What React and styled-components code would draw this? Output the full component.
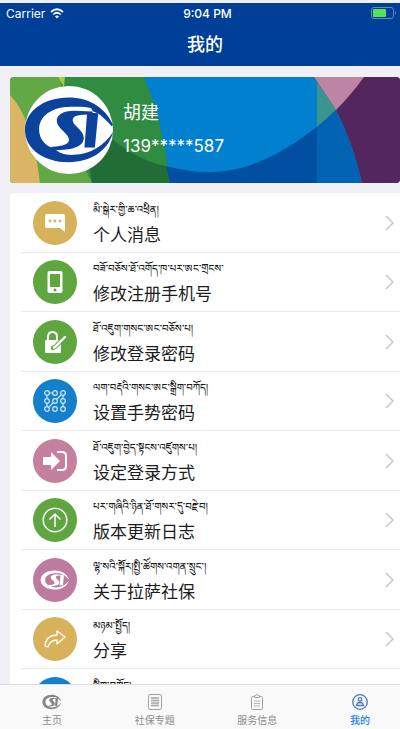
import React from "react";
import styled, { createGlobalStyle } from "styled-components";

const GlobalStyle = createGlobalStyle`
  * {
    box-sizing: border-box;
  }

  body {
    margin: 0;
    background-color: #efeff5;
    font-family: "Liberation Sans", "Noto Sans CJK SC", sans-serif;
    color: #1c1c1c;
  }
`;

const Page = styled.div`
  display: flex;
  flex-direction: column;
  height: 100vh;
  overflow: hidden;
`;

const Header = styled.header`
  flex: none;
  margin-top: 3px;
  padding-bottom: 8px;
  background-color: #003f98;
  color: #fff;
`;

const StatusBar = styled.div`
  display: grid;
  grid-template-columns: 1fr auto 1fr;
  align-items: center;
  height: 20px;
  padding: 0 3px 0 6px;
  font-family: Inter, sans-serif;
  font-size: 12px;
`;

const Carrier = styled.span`
  display: flex;
  align-items: center;
  gap: 5px;
`;

const Clock = styled.span`
  padding-left: 12px;
  font-weight: 500;
`;

const Battery = styled.svg`
  justify-self: end;
`;

const Title = styled.h1`
  margin: 9px 0 0;
  padding-left: 10px;
  font-size: 18px;
  font-weight: 500;
  line-height: 26px;
  text-align: center;
`;

const Main = styled.main`
  flex: 1;
  min-height: 0;
  display: flex;
  flex-direction: column;
  gap: 10px;
  padding: 11px 0 0 10px;
`;

const Profile = styled.section`
  position: relative;
  flex: none;
  display: flex;
  align-items: center;
  gap: 10px;
  height: 106px;
  padding-left: 15px;
  border-radius: 4px;
  overflow: hidden;
  color: #fff;
`;

const Backdrop = styled.svg`
  position: absolute;
  inset: 0;
  width: 100%;
  height: 100%;
`;

const Avatar = styled.svg`
  position: relative;
`;

const Owner = styled.div`
  position: relative;
`;

const OwnerName = styled.div`
  font-size: 18px;
  line-height: 32px;
`;

const Phone = styled.div`
  font-family: Inter, sans-serif;
  font-size: 17px;
  line-height: 34px;
`;

const Menu = styled.ul`
  flex: 1;
  min-height: 0;
  margin: 0;
  padding: 0;
  border-radius: 4px 0 0 0;
  background-color: #fff;
  list-style: none;
  overflow: hidden;
`;

const MenuItem = styled.li`
  height: 60px;
  padding-left: 11px;

  &:nth-child(even) {
    height: 59px;
  }
`;

const MenuButton = styled.button`
  display: flex;
  align-items: center;
  gap: 16px;
  width: 100%;
  height: 100%;
  padding: 0 6px 0 12px;
  border: none;
  border-bottom: 1px solid #ebebed;
  background: none;
  color: inherit;
  font-family: inherit;
  text-align: left;
  cursor: pointer;
`;

const Disc = styled.span`
  flex: none;
  display: flex;
  align-items: center;
  justify-content: center;
  width: 44px;
  height: 44px;
  border-radius: 50%;
  background-color: ${(props) => props.$color};
`;

const Labels = styled.span`
  flex: 1;
  display: flex;
  flex-direction: column;
  height: 44px;
`;

const Tibetan = styled.span`
  height: 22px;
  font-family: "Noto Serif Tibetan", "Noto Sans Tibetan", "Microsoft Himalaya", "Noto Sans", serif;
  font-size: 10px;
  font-weight: 500;
  line-height: 22px;
  white-space: nowrap;
`;

const Chinese = styled.span`
  font-size: 17px;
  line-height: 26px;
  white-space: nowrap;
`;

const TabBar = styled.nav`
  flex: none;
  display: flex;
  justify-content: space-between;
  height: 45px;
  padding: 0 20px 0 32px;
  border-top: 1px solid #dcdcdd;
  background-color: #f9f9f9;
`;

const Tab = styled.a`
  display: flex;
  flex-direction: column;
  align-items: center;
  gap: 4px;
  width: 40px;
  padding-top: 9px;
  color: ${(props) => (props.$active ? "#1a82f5" : "#8c8c8c")};
  font-size: 10px;
  font-weight: ${(props) => (props.$active ? 500 : 400)};
  line-height: 14px;
  text-decoration: none;
  white-space: nowrap;
`;

const Emblem = ({ color }) => (
  <g fill={color}>
    <path d="M272 122C248 70 200 41 140 41C66 41 10 82 10 138C10 194 66 234 140 234C205 234 258 200 272 145C246 184 205 211 155 212C127 213 110 205 101 196L88 190C64 180 52 160 52 136C52 98 88 70 145 69C173 68 192 69 207 73L212 82L228 89C240 98 256 112 268 127Z" />
    <path d="M211 83L158 81C121 81 102 95 105 114C109 136 141 148 141 168C141 181 122 186 92 188L80 196C135 202 181 193 185 165C188 139 151 125 152 108C153 94 172 92 211 92Z" />
    <path d="M195 86L228 88L218 190L187 190Z" />
  </g>
);

const ChatIcon = () => (
  <svg width="22" height="20" viewBox="0 0 22 20">
    <path d="M3 1H19Q21 1 21 3V19L16 15H3Q1 15 1 13V3Q1 1 3 1Z" fill="#fff" />
    <g fill="#d8b25a">
      <circle cx="6" cy="8" r="1.4" />
      <circle cx="11" cy="8" r="1.4" />
      <circle cx="16" cy="8" r="1.4" />
    </g>
  </svg>
);

const PhoneIcon = () => (
  <svg width="16" height="24" viewBox="0 0 16 24">
    <rect x="0.5" y="1" width="15" height="22" rx="2" fill="#fff" />
    <rect x="3" y="4" width="10" height="13" fill="#5fa641" />
    <circle cx="8" cy="20" r="1.5" fill="#5fa641" />
  </svg>
);

const LockIcon = () => (
  <svg width="24" height="24" viewBox="0 0 24 24">
    <path d="M5 11V7Q5 2 9.5 2Q14 2 14 7V11" fill="none" stroke="#fff" strokeWidth="2" />
    <rect x="2" y="10" width="16" height="13" rx="1" fill="#fff" />
    <path d="M22 7L13 16L10 18" fill="none" stroke="#5fa641" strokeWidth="4.4" strokeLinecap="round" />
    <path d="M22 7L13 16L11 17.5" fill="none" stroke="#fff" strokeWidth="2.4" strokeLinecap="round" />
  </svg>
);

const GestureIcon = () => (
  <svg width="22" height="22" viewBox="0 0 22 22" fill="none" stroke="#cfe6f7" strokeWidth="1.2">
    <path d="M3 5V9M3 13V17M5 3H9M17 5L13 9M9 13L5 17M19 5V9M19 13V17" />
    {[3, 11, 19].map((y) =>
      [3, 11, 19].map((x) => <circle key={`${x}-${y}`} cx={x} cy={y} r="2.3" fill="#147fcb" />)
    )}
  </svg>
);

const LoginIcon = () => (
  <svg width="26" height="22" viewBox="0 0 26 22">
    <path d="M1 7H9V2L18 11L9 20V15H1Z" fill="#fff" />
    <path d="M15 2H20Q24 2 24 6V16Q24 20 20 20H15" fill="none" stroke="#fff" strokeWidth="2" />
  </svg>
);

const UpIcon = () => (
  <svg width="26" height="26" viewBox="0 0 26 26" fill="none" stroke="#fff" strokeWidth="1.5">
    <circle cx="13" cy="13" r="11.8" />
    <path d="M13 20V7M7.5 12.5L13 7L18.5 12.5" />
  </svg>
);

const AboutIcon = () => (
  <svg width="30" height="20" viewBox="4 36 280 202" preserveAspectRatio="none">
    <Emblem color="#fff" />
  </svg>
);

const ShareIcon = () => (
  <svg width="22" height="20" viewBox="0 0 22 20" fill="none" stroke="#fff" strokeWidth="1.3" strokeLinejoin="round">
    <path d="M13 2L21 8L13 15V11Q6 11 4 18L1 17Q2 6 13 6Z" />
  </svg>
);

const items = [
  { id: "message", color: "#d8b25a", Icon: ChatIcon, bo: "མི་སྒེར་གྱི་ཆ་འཕྲིན།", zh: "个人消息" },
  { id: "phone", color: "#5fa641", Icon: PhoneIcon, bo: "བཟོ་བཅོས་ཐོ་འགོད་ཁ་པར་ཨང་གྲངས་", zh: "修改注册手机号" },
  { id: "password", color: "#5fa641", Icon: LockIcon, bo: "ཐོ་འཇུག་གསང་ཨང་བཅོས་པ།", zh: "修改登录密码" },
  { id: "gesture", color: "#147fcb", Icon: GestureIcon, bo: "ལག་བརྡའི་གསང་ཨང་སྒྲིག་བཀོད།", zh: "设置手势密码" },
  { id: "login", color: "#c4809c", Icon: LoginIcon, bo: "ཐོ་འཇུག་བྱེད་སྟངས་འཛུགས་པ།", zh: "设定登录方式" },
  { id: "update", color: "#5fa641", Icon: UpIcon, bo: "པར་གཞིའི་ཉིན་ཐོ་གསར་དུ་བརྗེ་བ།", zh: "版本更新日志" },
  { id: "about", color: "#bd7b9f", Icon: AboutIcon, bo: "ལྷ་སའི་སྐོར།སྤྱི་ཚོགས་འགན་སྲུང་།", zh: "关于拉萨社保" },
  { id: "share", color: "#d8b25a", Icon: ShareIcon, bo: "མཉམ་སྤྱོད།", zh: "分享" },
  { id: "settings", color: "#147fcb", bo: "སྒྲིག་བཀོད།" },
];

const HomeIcon = () => (
  <svg width="20" height="16" viewBox="4 30 280 214" preserveAspectRatio="none">
    <Emblem color="#858585" />
  </svg>
);

const TopicIcon = () => (
  <svg width="16" height="16" viewBox="0 1 16 16" fill="none" stroke="#a3a3a3">
    <rect x="1.5" y="1.5" width="13" height="15" rx="1.5" />
    <path d="M4 5H12M4 7.5H12M4 10H12M4 12.5H12" strokeWidth="1.3" />
  </svg>
);

const ServiceIcon = () => (
  <svg width="14" height="16" viewBox="0 1 14 16" fill="none" stroke="#a3a3a3">
    <rect x="1.5" y="3.5" width="11" height="13" rx="1" />
    <path d="M4.5 4.5V2.5H5.5Q7 0.5 8.5 2.5H9.5V4.5Z" fill="#f9f9f9" />
    <path d="M4 8H10M4 10.5H10M4 13H10" strokeWidth="0.8" />
  </svg>
);

const MeIcon = () => (
  <svg width="16" height="16" viewBox="1 1 16 16" fill="none" stroke="#4a78bd" strokeWidth="1.3">
    <circle cx="9" cy="9" r="7.3" />
    <circle cx="9" cy="6.5" r="1.8" />
    <path d="M5.5 12.5Q6 9.5 9 9.5Q12 9.5 12.5 12.5Z" />
  </svg>
);

const tabs = [
  { label: "主页", Icon: HomeIcon },
  { label: "社保专题", Icon: TopicIcon },
  { label: "服务信息", Icon: ServiceIcon },
  { label: "我的", Icon: MeIcon, active: true },
];

const App = () => {
  return (
    <>
      <GlobalStyle />
      <Page>
        <Header>
          <StatusBar>
            <Carrier>
              Carrier
              <svg width="14" height="11" viewBox="0 0 14 11" fill="none" stroke="#fff" strokeWidth="1.7">
                <path d="M1 4Q7 -1.5 13 4M3.3 6.5Q7 3 10.7 6.5" />
                <path d="M5 8.3Q7 6.6 9 8.3L7 10.5Z" fill="#fff" stroke="none" />
              </svg>
            </Carrier>
            <Clock>9:04 PM</Clock>
            <Battery width="26" height="12" viewBox="0 0 26 12">
              <rect x="0.5" y="0.5" width="22" height="11" rx="2.5" fill="none" stroke="#6688bd" />
              <rect x="2" y="2" width="13" height="8" rx="1" fill="#53e353" />
              <path d="M24 4Q26 6 24 8Z" fill="#6688bd" />
            </Battery>
          </StatusBar>
          <Title>我的</Title>
        </Header>

        <Main>
          <Profile>
            <Backdrop viewBox="0 0 390 106" preserveAspectRatio="none" aria-hidden="true">
              <rect width="390" height="106" fill="#2f8c41" />
              <path d="M0 0H50Q58 60 82 106H0Z" fill="#62a844" />
              <path d="M48 0H55L54 10Z" fill="#a9cb3c" />
              <path d="M0 18Q22 40 30 106H0Z" fill="#dab566" />
              <path d="M70 30C100 65 128 84 156 89L160 106H82Z" fill="#226d35" />
              <path d="M134 0Q152 40 160 106H307V0Z" fill="#0080cf" />
              <path d="M156 89Q178 95 200 95C250 95 290 62 307 50V106H160Z" fill="#004fa2" />
              <path d="M304 0H390V106H352Q343 66 326 33Z" fill="#54265f" />
              <path d="M304 0H354Q341 18 326 33Z" fill="#bd85a3" />
              <path d="M307 5L326 33L307 50Z" fill="#3b958e" />
              <path d="M307 50L326 33Q343 66 352 106H307Z" fill="#0063b3" />
            </Backdrop>
            <Avatar width="88" height="88" viewBox="10 7 262 262" role="img" aria-label="CSI">
              <circle cx="141" cy="138" r="131" fill="#fff" />
              <Emblem color="#0b429c" />
            </Avatar>
            <Owner>
              <OwnerName>胡建</OwnerName>
              <Phone>139*****587</Phone>
            </Owner>
          </Profile>

          <Menu>
            {items.map(({ id, color, Icon, bo, zh }) => (
              <MenuItem key={id}>
                <MenuButton type="button">
                  <Disc $color={color}>{Icon && <Icon />}</Disc>
                  <Labels>
                    <Tibetan lang="bo">{bo}</Tibetan>
                    {zh && <Chinese>{zh}</Chinese>}
                  </Labels>
                  <svg width="9" height="16" viewBox="0 0 9 16" fill="none" stroke="#c7c7cb" strokeWidth="1.5">
                    <path d="M1 1L8 8L1 15" />
                  </svg>
                </MenuButton>
              </MenuItem>
            ))}
          </Menu>
        </Main>

        <TabBar>
          {tabs.map(({ label, Icon, active }) => (
            <Tab key={label} href="#" $active={active}>
              <Icon />
              {label}
            </Tab>
          ))}
        </TabBar>
      </Page>
    </>
  );
};

export default App;
